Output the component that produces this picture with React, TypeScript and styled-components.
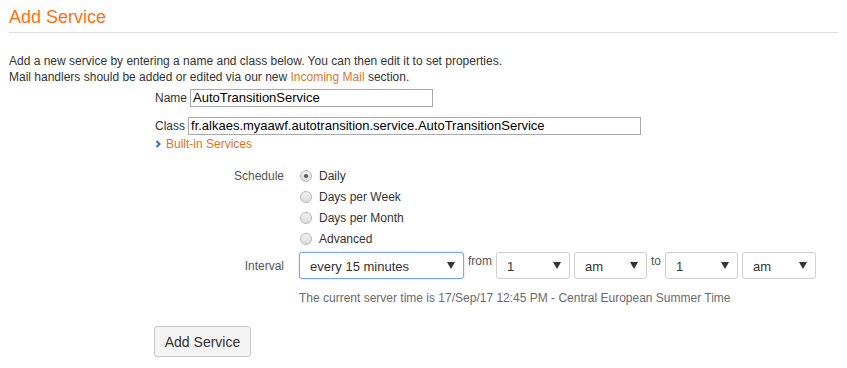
import React from "react";
import styled, { createGlobalStyle } from "styled-components";

const Global = createGlobalStyle`
  html, body { margin: 0; padding: 0; background: #fff; }
  body { font-family: "Liberation Sans", Arial, sans-serif; font-size: 12px; color: #333; }
`;

const Page = styled.div`
  padding: 7px 9px 0 9px;
`;

const Title = styled.h2`
  margin: 0;
  font-size: 18px;
  font-weight: normal;
  line-height: 21px;
  color: #ff6f0f;
  padding-bottom: 4px;
  border-bottom: 1px solid #dcdcdc;
`;

const Intro = styled.p`
  margin: 20px 0 0 0;
  line-height: 16px;
  font-size: 12px;
  color: #333;
`;

const Link = styled.a`
  color: #d9792f;
  text-decoration: none;
`;

const Fields = styled.div`
  margin: 4px 0 0 146px;
  display: flex;
  flex-direction: column;
`;

const FieldRow = styled.div<{ $mt?: number }>`
  display: flex;
  align-items: center;
  gap: 3px;
  margin-top: ${(p) => p.$mt ?? 0}px;
`;

const FieldLabel = styled.label`
  font-size: 12px;
  color: #333;
`;

const TextBox = styled.div<{ $w: number }>`
  width: ${(p) => p.$w}px;
  height: 18px;
  box-sizing: border-box;
  border: 1px solid #a9a9a9;
  padding: 0 2px;
  font-size: 13px;
  line-height: 16px;
  color: #000;
  white-space: nowrap;
`;

const Toggle = styled.div`
  display: flex;
  align-items: center;
  gap: 4px;
  margin-top: 1px;
  color: #e0741c;
  font-size: 12px;
  line-height: 16px;
`;

const Grid = styled.div`
  margin: 16px 0 0 0;
  display: grid;
  grid-template-columns: 275px auto;
  column-gap: 15px;
`;

const GridLabel = styled.div<{ $mt?: number }>`
  text-align: right;
  color: #555;
  font-size: 12px;
  line-height: 16px;
  margin-top: ${(p) => p.$mt ?? 0}px;
`;

const RadioList = styled.div`
  display: flex;
  flex-direction: column;
  gap: 5px;
`;

const RadioItem = styled.div`
  display: flex;
  align-items: center;
  gap: 7px;
  height: 16px;
  font-size: 12px;
  color: #333;
`;

const RadioDot = styled.span<{ $on?: boolean }>`
  width: 12px;
  height: 12px;
  margin-left: 1px;
  box-sizing: border-box;
  border-radius: 50%;
  border: 1px solid #b9b9b9;
  background: linear-gradient(#f2f2f2, #dcdcdc);
  display: inline-flex;
  align-items: center;
  justify-content: center;
  &::after {
    content: "";
    display: ${(p) => (p.$on ? "block" : "none")};
    width: 4px;
    height: 4px;
    border-radius: 50%;
    background: #555;
  }
`;

const IntervalRow = styled.div`
  display: flex;
  align-items: flex-start;
  gap: 4px;
  margin-top: 5px;
`;

const Select = styled.div<{ $w: number; $focus?: boolean }>`
  width: ${(p) => p.$w}px;
  height: 27px;
  box-sizing: border-box;
  border: 1px solid ${(p) => (p.$focus ? "#7aa7e6" : "#cfcfcf")};
  box-shadow: ${(p) => (p.$focus ? "0 0 2px rgba(102,153,230,0.5)" : "none")};
  border-radius: 3px;
  display: flex;
  align-items: center;
  justify-content: space-between;
  padding: 2px 8px 0 10px;
  font-size: 13px;
  color: #333;
  background: #fff;
`;

const Arrow = styled.span`
  width: 0;
  height: 0;
  border-left: 4px solid transparent;
  border-right: 4px solid transparent;
  border-top: 7px solid #333;
  margin-top: -2px;
`;

const Joiner = styled.span`
  font-size: 12px;
  color: #555;
  line-height: 16px;
  margin-top: 1px;
`;

const ServerTime = styled.div`
  margin-top: 11px;
  color: #6b6b6b;
  font-size: 12px;
  line-height: 16px;
`;

const Button = styled.button`
  margin: 20px 0 0 145px;
  width: 97px;
  height: 31px;
  box-sizing: border-box;
  border: 1px solid #c9c9c9;
  border-radius: 3px;
  background: #f4f4f4;
  font-family: "Liberation Sans", Arial, sans-serif;
  font-size: 14px;
  color: #333;
  padding: 0;
`;

const Chevron = () => (
  <svg width="7" height="8" viewBox="0 0 7 8">
    <path d="M1.5 1 L4.5 4 L1.5 7" fill="none" stroke="#3a6fb0" strokeWidth="2" />
  </svg>
);

const SelectBox = ({ w, v, focus }: { w: number; v: string; focus?: boolean }) => (
  <Select $w={w} $focus={focus}>
    <span>{v}</span>
    <Arrow />
  </Select>
);

export default function App() {
  const radios = ["Daily", "Days per Week", "Days per Month", "Advanced"];
  return (
    <Page>
      <Global />
      <Title>Add Service</Title>
      <Intro>
        Add a new service by entering a name and class below. You can then edit it to set properties.
        <br />
        Mail handlers should be added or edited via our new <Link>Incoming Mail</Link> section.
      </Intro>
      <Fields>
        <FieldRow>
          <FieldLabel>Name</FieldLabel>
          <TextBox $w={243}>AutoTransitionService</TextBox>
        </FieldRow>
        <FieldRow $mt={10}>
          <FieldLabel>Class</FieldLabel>
          <TextBox $w={453}>fr.alkaes.myaawf.autotransition.service.AutoTransitionService</TextBox>
        </FieldRow>
        <Toggle>
          <Chevron />
          <span>Built-in Services</span>
        </Toggle>
      </Fields>
      <Grid>
        <GridLabel $mt={0}>Schedule</GridLabel>
        <RadioList>
          {radios.map((r, i) => (
            <RadioItem key={r}>
              <RadioDot $on={i === 0} />
              {r}
            </RadioItem>
          ))}
        </RadioList>
        <GridLabel $mt={11}>Interval</GridLabel>
        <div>
          <IntervalRow>
            <SelectBox w={165} v="every 15 minutes" focus />
            <Joiner>from</Joiner>
            <SelectBox w={74} v="1" />
            <SelectBox w={73} v="am" />
            <Joiner>to</Joiner>
            <SelectBox w={73} v="1" />
            <SelectBox w={74} v="am" />
          </IntervalRow>
          <ServerTime>The current server time is 17/Sep/17 12:45 PM - Central European Summer Time</ServerTime>
        </div>
      </Grid>
      <Button>Add Service</Button>
    </Page>
  );
}
